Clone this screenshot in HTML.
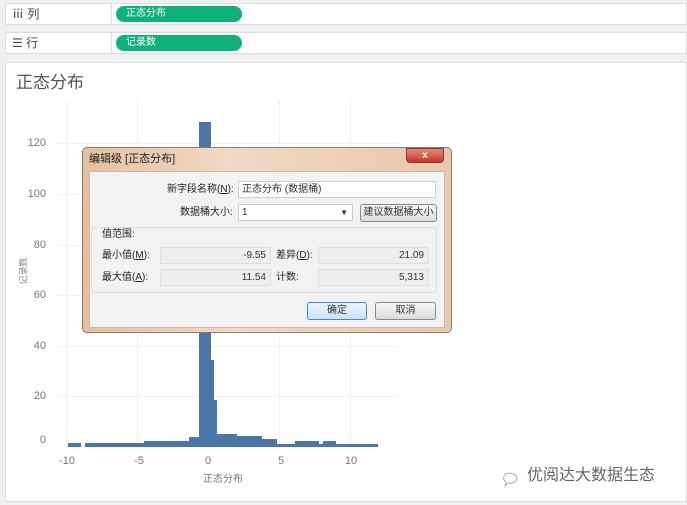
<!DOCTYPE html>
<html><head><meta charset="utf-8"><style>
*{box-sizing:border-box;margin:0;padding:0}
body{width:687px;height:505px;background:#f0f0f0;font-family:"Liberation Sans","Noto Sans CJK SC",sans-serif;position:relative;overflow:hidden;color:#333}
.abs{position:absolute}
.shelf{position:absolute;left:5px;width:682px;height:22px;background:#fff;border:1px solid #ddd}
.shelf .lab{position:absolute;left:0;top:0;width:106px;height:20px;border-right:1px solid #ddd;font-size:12px;line-height:20px;padding-left:6px;color:#444}
.pill{position:absolute;left:110px;top:2px;width:126px;height:16px;border-radius:8px;background:#0db17a;color:#fff;font-size:10px;line-height:16px;padding-left:10px;display:flex;align-items:center}
.panel{position:absolute;left:5px;top:62px;width:682px;height:440px;background:#fff;border:1px solid #ddd}
.yl{position:absolute;font-size:11px;color:#777;text-align:right;width:30px;left:16px;line-height:12px}
.xl{position:absolute;font-size:11px;color:#777;top:455px;width:30px;text-align:center;line-height:12px}
.bar{position:absolute;background:#4a76a8}
.gl{position:absolute;background:#f0f0f0}
.dlg{position:absolute;left:82px;top:147px;width:370px;height:186px;border:1px solid #8a7a6a;border-radius:5px;background:linear-gradient(90deg,#e5c0a0,#f1d9c4 40%,#e9c7ab);}
.inner{position:absolute;left:6px;top:23px;width:356px;height:157px;background:#f2f2f2;border:1px solid #c9b8a8}
.t{position:absolute;font-size:10px;color:#222;white-space:nowrap;line-height:12px}
.box{position:absolute;background:#fff;border:1px solid #ccc;font-size:10px;line-height:15px;padding-left:3px}
.ro{position:absolute;background:#eee;border:1px solid #ddd;font-size:10px;line-height:15px;text-align:right;padding-right:4px}
.btn{position:absolute;border:1px solid #888;border-radius:3px;background:linear-gradient(#f6f6f6,#dcdcdc);font-size:10px;text-align:center;line-height:16px}
</style></head><body>
<div class="shelf" style="top:3px"><div class="lab">ⅲ 列</div><div class="pill">正态分布</div></div>
<div class="shelf" style="top:32px"><div class="lab">☰ 行</div><div class="pill">记录数</div></div>
<div class="panel"></div>
<div class="t" style="left:16px;top:73px;font-size:17px;line-height:20px;color:#555">正态分布</div>
<div class="gl" style="left:58px;top:143px;width:340px;height:1px"></div>
<div class="gl" style="left:58px;top:194px;width:340px;height:1px"></div>
<div class="gl" style="left:58px;top:245px;width:340px;height:1px"></div>
<div class="gl" style="left:58px;top:295px;width:340px;height:1px"></div>
<div class="gl" style="left:58px;top:346px;width:340px;height:1px"></div>
<div class="gl" style="left:58px;top:396px;width:340px;height:1px"></div>
<div class="gl" style="left:66px;top:100px;width:1px;height:348px"></div>
<div class="gl" style="left:137px;top:100px;width:1px;height:348px"></div>
<div class="gl" style="left:279px;top:100px;width:1px;height:348px"></div>
<div class="gl" style="left:350px;top:100px;width:1px;height:348px"></div>
<div class="yl" style="top:137px">120</div>
<div class="yl" style="top:188px">100</div>
<div class="yl" style="top:239px">80</div>
<div class="yl" style="top:289px">60</div>
<div class="yl" style="top:340px">40</div>
<div class="yl" style="top:390px">20</div>
<div class="yl" style="top:434px">0</div>
<div class="t" style="left:10px;top:265px;font-size:9px;color:#888;transform:rotate(-90deg)">记录数</div>
<div class="xl" style="left:52px">-10</div>
<div class="xl" style="left:124px">-5</div>
<div class="xl" style="left:193px">0</div>
<div class="xl" style="left:266px">5</div>
<div class="xl" style="left:336px">10</div>
<div class="t" style="left:203px;top:474px;color:#777">正态分布</div>
<div class="bar" style="left:68px;top:443px;width:13px;height:4px"></div>
<div class="bar" style="left:85px;top:443px;width:59px;height:4px"></div>
<div class="bar" style="left:144px;top:441px;width:45px;height:6px"></div>
<div class="bar" style="left:189px;top:437px;width:10px;height:10px"></div>
<div class="bar" style="left:199px;top:122px;width:12px;height:325px"></div>
<div class="bar" style="left:211px;top:360px;width:3px;height:87px"></div>
<div class="bar" style="left:214px;top:400px;width:3px;height:47px"></div>
<div class="bar" style="left:217px;top:434px;width:20px;height:13px"></div>
<div class="bar" style="left:237px;top:436px;width:25px;height:11px"></div>
<div class="bar" style="left:262px;top:439px;width:15px;height:8px"></div>
<div class="bar" style="left:277px;top:444px;width:18px;height:3px"></div>
<div class="bar" style="left:295px;top:441px;width:24px;height:6px"></div>
<div class="bar" style="left:319px;top:444px;width:4px;height:3px"></div>
<div class="bar" style="left:323px;top:441px;width:13px;height:6px"></div>
<div class="bar" style="left:336px;top:444px;width:42px;height:3px"></div>
<div class="dlg">
<div class="t" style="left:6px;top:5px;font-size:11px;line-height:13px">编辑级 [正态分布]</div>
<div class="abs" style="left:323px;top:0;width:38px;height:15px;border-radius:0 0 4px 4px;background:linear-gradient(#e88a7a,#c8352a);border:1px solid #8a3a30;color:#fff;font-size:10px;text-align:center;line-height:13px;font-weight:bold">x</div>
<div class="inner">
<div class="t" style="left:77px;top:12px">新字段名称(<u>N</u>):</div>
<div class="box" style="left:148px;top:9px;width:198px;height:17px">正态分布 (数据桶)</div>
<div class="t" style="left:90px;top:35px">数据桶大小:</div>
<div class="box" style="left:148px;top:32px;width:115px;height:17px">1<span style="position:absolute;right:4px;font-size:8px">▼</span></div>
<div class="btn" style="left:270px;top:32px;width:77px;height:18px">建议数据桶大小</div>
<div class="abs" style="left:1px;top:55px;width:346px;height:66px;border:1px solid #ddd;border-radius:3px"></div>
<div class="t" style="left:12px;top:57px">值范围:</div>
<div class="t" style="left:12px;top:78px">最小值(<u>M</u>):</div>
<div class="ro" style="left:70px;top:75px;width:111px;height:17px">-9.55</div>
<div class="t" style="left:186px;top:78px">差异(<u>D</u>):</div>
<div class="ro" style="left:228px;top:75px;width:111px;height:17px">21.09</div>
<div class="t" style="left:12px;top:100px">最大值(<u>A</u>):</div>
<div class="ro" style="left:70px;top:97px;width:111px;height:17px">11.54</div>
<div class="t" style="left:186px;top:100px">计数:</div>
<div class="ro" style="left:228px;top:97px;width:111px;height:17px">5,313</div>
<div class="btn" style="left:217px;top:130px;width:60px;height:18px;border-color:#3c8ccf;background:linear-gradient(#eaf4fc,#cfe4f6)">确定</div>
<div class="btn" style="left:285px;top:130px;width:61px;height:18px">取消</div>
</div></div>
<svg class="abs" style="left:500px;top:468px" width="24" height="20"><path d="M6 6a7 5 0 1 1 2 9l-3 3 1-4a6 5 0 0 1 0-8z" fill="none" stroke="#aaa" stroke-width="1"/></svg>
<div class="t" style="left:527px;top:466px;font-size:16px;line-height:20px;color:#666">优阅达大数据生态</div>
</body></html>
